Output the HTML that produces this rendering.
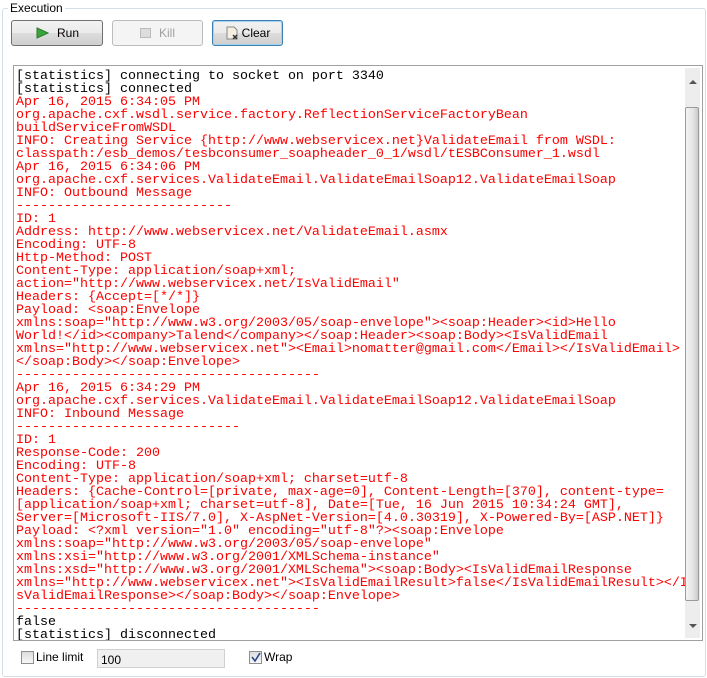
<!DOCTYPE html>
<html><head><style>
body{margin:0;width:707px;height:678px;background:#fff;font-family:"Liberation Sans",sans-serif;position:relative;overflow:hidden}
.grp{position:absolute;left:2px;top:8px;width:702px;height:667px;border:1px solid #d5dfe5;border-radius:3px}
.legend{position:absolute;left:8px;top:0px;background:#fff;padding:0 2px;font-size:12px;color:#000}
.btn{position:absolute;top:20px;height:26px;border:1px solid #707070;border-radius:3px;background:linear-gradient(#f2f2f2,#ebebeb 50%,#dddddd 51%,#cfcfcf);font-size:12px;box-sizing:border-box;display:flex;align-items:center;justify-content:center}
.out{position:absolute;left:13px;top:65px;width:690px;height:576px;border:1px solid #a0a0a0;box-sizing:border-box;overflow:hidden}
pre{margin:0;position:absolute;left:2px;top:4px;font-family:"Liberation Mono",monospace;font-size:13.33px;line-height:13px;color:#f00;letter-spacing:0}
.k{color:#000}
.sb{position:absolute;right:2px;top:2px;width:15px;height:570px;background:#ededed}
.thumb{position:absolute;left:0;top:39px;width:14px;height:494px;border:1px solid #9a9a9a;border-radius:2px;box-sizing:border-box;background:linear-gradient(90deg,#f4f4f4,#e4e4e4 60%,#c9c9c9)}
.cb{position:absolute;width:11px;height:11px;border:1px solid #8e8f8f;background:linear-gradient(#ddd,#f8f8f8);top:651px}
</style></head><body>
<div class="grp"></div>
<div class="legend" style="top:1px">Execution</div>
<div class="btn" style="left:11px;width:92px"><svg width="14" height="12" style="margin-right:8px"><path d="M2 1 L13 6 L2 11 Z" fill="#3aa53a" stroke="#2a7a2a"/></svg>Run</div>
<div class="btn" style="left:112px;width:91px;border-color:#bcbcbc;background:#f4f4f4;color:#a0a0a0"><span style="display:inline-block;width:9px;height:8px;border:1px solid #bbb;background:#ddd;margin-right:8px"></span>Kill</div>
<div class="btn" style="left:212px;width:71px;border-color:#3c7fb1;box-shadow:inset 0 0 0 1px #a0d4f0"><svg width="14" height="14" style="margin-right:3px"><path d="M2 1h7l3 3v9H2z" fill="#f4efe0" stroke="#888"/><path d="M8 9l4 4M12 9l-4 4" stroke="#333" stroke-width="1.5"/></svg>Clear</div>
<div class="out"><pre><span class="k">[statistics] connecting to socket on port 3340</span>
<span class="k">[statistics] connected</span>
Apr 16, 2015 6:34:05 PM
org.apache.cxf.wsdl.service.factory.ReflectionServiceFactoryBean
buildServiceFromWSDL
INFO: Creating Service {http://www.webservicex.net}ValidateEmail from WSDL:
classpath:/esb_demos/tesbconsumer_soapheader_0_1/wsdl/tESBConsumer_1.wsdl
Apr 16, 2015 6:34:06 PM
org.apache.cxf.services.ValidateEmail.ValidateEmailSoap12.ValidateEmailSoap
INFO: Outbound Message
---------------------------
ID: 1
Address: http://www.webservicex.net/ValidateEmail.asmx
Encoding: UTF-8
Http-Method: POST
Content-Type: application/soap+xml;
action="http://www.webservicex.net/IsValidEmail"
Headers: {Accept=[*/*]}
Payload: &lt;soap:Envelope
xmlns:soap="http://www.w3.org/2003/05/soap-envelope"&gt;&lt;soap:Header&gt;&lt;id&gt;Hello
World!&lt;/id&gt;&lt;company&gt;Talend&lt;/company&gt;&lt;/soap:Header&gt;&lt;soap:Body&gt;&lt;IsValidEmail
xmlns="http://www.webservicex.net"&gt;&lt;Email&gt;nomatter@gmail.com&lt;/Email&gt;&lt;/IsValidEmail&gt;
&lt;/soap:Body&gt;&lt;/soap:Envelope&gt;
--------------------------------------
Apr 16, 2015 6:34:29 PM
org.apache.cxf.services.ValidateEmail.ValidateEmailSoap12.ValidateEmailSoap
INFO: Inbound Message
----------------------------
ID: 1
Response-Code: 200
Encoding: UTF-8
Content-Type: application/soap+xml; charset=utf-8
Headers: {Cache-Control=[private, max-age=0], Content-Length=[370], content-type=
[application/soap+xml; charset=utf-8], Date=[Tue, 16 Jun 2015 10:34:24 GMT],
Server=[Microsoft-IIS/7.0], X-AspNet-Version=[4.0.30319], X-Powered-By=[ASP.NET]}
Payload: &lt;?xml version="1.0" encoding="utf-8"?&gt;&lt;soap:Envelope
xmlns:soap="http://www.w3.org/2003/05/soap-envelope"
xmlns:xsi="http://www.w3.org/2001/XMLSchema-instance"
xmlns:xsd="http://www.w3.org/2001/XMLSchema"&gt;&lt;soap:Body&gt;&lt;IsValidEmailResponse
xmlns="http://www.webservicex.net"&gt;&lt;IsValidEmailResult&gt;false&lt;/IsValidEmailResult&gt;&lt;/I
sValidEmailResponse&gt;&lt;/soap:Body&gt;&lt;/soap:Envelope&gt;
--------------------------------------
<span class="k">false</span>
<span class="k">[statistics] disconnected</span></pre>
<div class="sb"><div style="position:absolute;left:4px;top:12px;width:0;height:0;border-left:4px solid transparent;border-right:4px solid transparent;border-bottom:4px solid #555"></div><div class="thumb"></div><div style="position:absolute;left:4px;bottom:10px;width:0;height:0;border-left:4px solid transparent;border-right:4px solid transparent;border-top:4px solid #555"></div></div>
</div>
<div class="cb" style="left:21px"></div>
<div style="position:absolute;left:36px;top:650px;font-size:12px">Line limit</div>
<div style="position:absolute;left:97px;top:649px;width:128px;height:19px;border:1px solid #d0d0d0;background:#f0f0f0;box-sizing:border-box;font-size:12px;padding:3px 3px">100</div>
<div class="cb" style="left:249px"><svg width="11" height="11" style="position:absolute;left:0;top:0"><path d="M2 5l3 4 5-8" stroke="#2a4a8a" stroke-width="1.6" fill="none"/></svg></div>
<div style="position:absolute;left:264px;top:650px;font-size:12px">Wrap</div>
</body></html>
